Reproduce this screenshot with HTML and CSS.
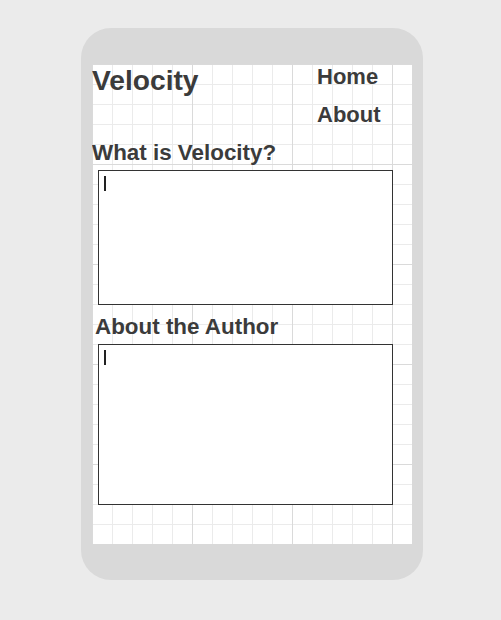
FILE: index.html
```html
<!DOCTYPE html>
<html lang="en">
<head>
<meta charset="utf-8">
<title>Velocity</title>
<link rel="stylesheet" href="styles.css">
</head>
<body>
<div class="device">
  <div class="screen">
    <header class="header">
      <h1 class="logo">Velocity</h1>
      <nav class="nav">
        <a class="nav-link" href="#">Home</a>
        <a class="nav-link" href="#">About</a>
      </nav>
    </header>
    <section class="section">
      <h2 class="section-title">What is Velocity?</h2>
      <div class="textbox textbox-short"><span class="caret"></span></div>
    </section>
    <section class="section section-author">
      <h2 class="section-title title-indent">About the Author</h2>
      <div class="textbox textbox-tall"><span class="caret"></span></div>
    </section>
  </div>
</div>
</body>
</html>
```
FILE: styles.css
```css
html, body {
  margin: 0;
  padding: 0;
  background: #ebebeb;
  font-family: "Liberation Sans", Arial, sans-serif;
  color: #3b3b3b;
}

.device {
  width: 320px;
  height: 480px;
  margin: 28px 0 0 81px;
  padding: 36px 11px;
  background: #d9d9d9;
  border-radius: 30px;
}

.screen {
  width: 320px;
  height: 480px;
  background-color: #ffffff;
  background-image:
    linear-gradient(to right, #dadada 1px, transparent 1px),
    linear-gradient(to bottom, #dadada 1px, transparent 1px),
    linear-gradient(to right, #ebebeb 1px, transparent 1px),
    linear-gradient(to bottom, #ebebeb 1px, transparent 1px);
  background-size: 100px 100px, 100px 100px, 20px 20px, 20px 20px;
  background-position: 0 0;
  overflow: hidden;
}

.header {
  display: flex;
  justify-content: space-between;
  align-items: flex-start;
  height: 64px;
}

.logo {
  margin: 0;
  font-size: 28.2px;
  font-weight: bold;
  line-height: 32px;
}

.nav {
  display: flex;
  flex-direction: column;
  gap: 12px;
  width: 95px;
}

.nav-link {
  font-size: 22px;
  font-weight: bold;
  line-height: 26px;
  color: #3b3b3b;
  text-decoration: none;
}

.section-title {
  margin: 12px 0 0;
  font-size: 22.4px;
  font-weight: bold;
  line-height: 25px;
}

.section-author .section-title {
  margin-top: 9px;
}

.title-indent {
  padding-left: 3px;
}

.textbox {
  box-sizing: border-box;
  width: 295px;
  margin: 5px 0 0 6px;
  border: 1px solid #333333;
  background: #ffffff;
  padding: 5px;
}

.textbox-short {
  height: 135px;
}

.textbox-tall {
  height: 161px;
}

.caret {
  display: block;
  width: 1.5px;
  height: 15px;
  background: #222222;
}
```
